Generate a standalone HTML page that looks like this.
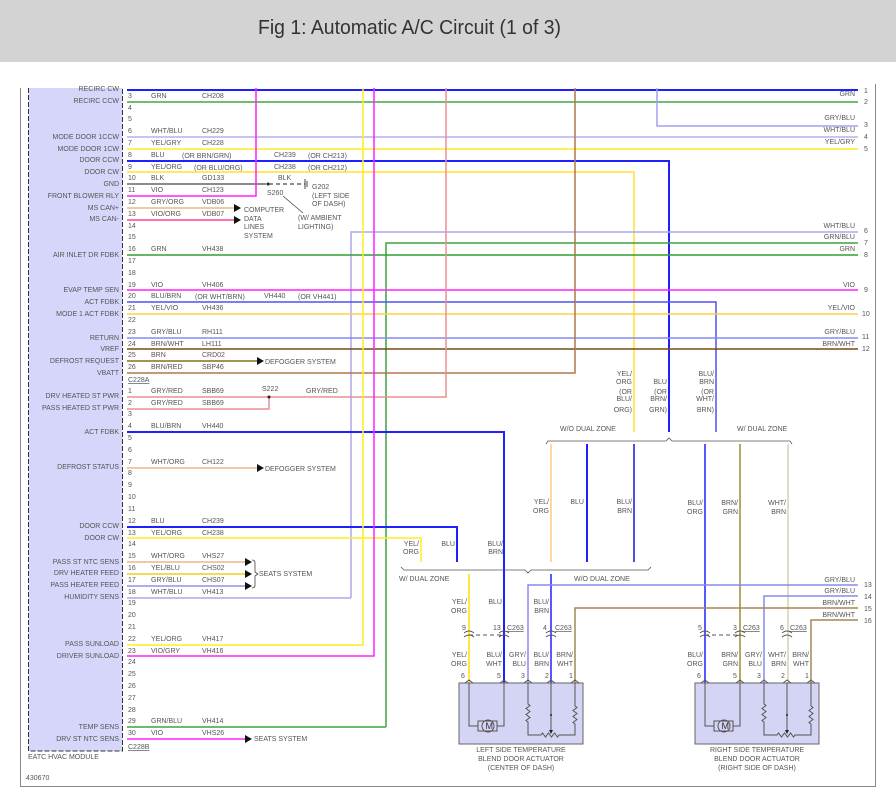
<!DOCTYPE html>
<html><head><meta charset="utf-8"><style>
html,body{margin:0;padding:0;background:#fff;}
svg{display:block;}
text{font-family:"Liberation Sans",sans-serif;font-size:7px;fill:#555;}
</style></head><body>
<svg width="896" height="809" viewBox="0 0 896 809" xmlns="http://www.w3.org/2000/svg">
<rect x="0" y="0" width="896" height="62" fill="#d3d3d3"/>
<text x="258" y="34" style="font-size:20px;fill:#333" textLength="303" lengthAdjust="spacingAndGlyphs">Fig 1: Automatic A/C Circuit (1 of 3)</text>
<!-- frame -->
<path d="M20.5,88 V786.5 H875.5 V84" fill="none" stroke="#888" stroke-width="1"/>
<!-- module -->
<rect x="28.5" y="88" width="94" height="663" fill="#d6d6fa"/>
<path d="M28.5,88 V751 H122.5 V88" fill="none" stroke="#333" stroke-width="1" stroke-dasharray="5,2"/>
<g text-anchor="end">
<text x="119" y="91">RECIRC CW</text><text x="119" y="103">RECIRC CCW</text>
<text x="119" y="139">MODE DOOR 1CCW</text><text x="119" y="151">MODE DOOR 1CW</text>
<text x="119" y="162">DOOR CCW</text><text x="119" y="174">DOOR CW</text>
<text x="119" y="186">GND</text><text x="119" y="198">FRONT BLOWER RLY</text>
<text x="119" y="210">MS CAN+</text><text x="119" y="221">MS CAN-</text>
<text x="119" y="257">AIR INLET DR FDBK</text>
<text x="119" y="292">EVAP TEMP SEN</text><text x="119" y="304">ACT FDBK</text>
<text x="119" y="316">MODE 1 ACT FDBK</text><text x="119" y="340">RETURN</text>
<text x="119" y="351">VREF</text><text x="119" y="363">DEFROST REQUEST</text>
<text x="119" y="375">VBATT</text>
<text x="119" y="398">DRV HEATED ST PWR</text><text x="119" y="410">PASS HEATED ST PWR</text>
<text x="119" y="434">ACT FDBK</text><text x="119" y="469">DEFROST STATUS</text>
<text x="119" y="528">DOOR CCW</text><text x="119" y="540">DOOR CW</text>
<text x="119" y="564">PASS ST NTC SENS</text><text x="119" y="575">DRV HEATER FEED</text>
<text x="119" y="587">PASS HEATER FEED</text><text x="119" y="599">HUMIDITY SENS</text>
<text x="119" y="646">PASS SUNLOAD</text><text x="119" y="658">DRIVER SUNLOAD</text>
<text x="119" y="729">TEMP SENS</text><text x="119" y="741">DRV ST NTC SENS</text>
</g>
<text x="28" y="759">EATC HVAC MODULE</text>
<text x="26" y="780">430670</text>
<text x="128" y="382" text-decoration="underline">C228A</text>
<text x="128" y="749" text-decoration="underline">C228B</text>
<!-- pin numbers -->
<g>
<text x="128" y="98">3</text><text x="128" y="110">4</text><text x="128" y="121">5</text><text x="128" y="133">6</text><text x="128" y="145">7</text><text x="128" y="157">8</text><text x="128" y="169">9</text><text x="128" y="180">10</text><text x="128" y="192">11</text><text x="128" y="204">12</text><text x="128" y="216">13</text><text x="128" y="228">14</text><text x="128" y="239">15</text><text x="128" y="251">16</text><text x="128" y="263">17</text><text x="128" y="275">18</text><text x="128" y="287">19</text><text x="128" y="298">20</text><text x="128" y="310">21</text><text x="128" y="322">22</text><text x="128" y="334">23</text><text x="128" y="346">24</text><text x="128" y="357">25</text><text x="128" y="369">26</text>
<text x="128" y="393">1</text><text x="128" y="405">2</text><text x="128" y="416">3</text><text x="128" y="428">4</text><text x="128" y="440">5</text><text x="128" y="452">6</text><text x="128" y="464">7</text><text x="128" y="475">8</text><text x="128" y="487">9</text><text x="128" y="499">10</text><text x="128" y="511">11</text><text x="128" y="523">12</text><text x="128" y="535">13</text><text x="128" y="546">14</text><text x="128" y="558">15</text><text x="128" y="570">16</text><text x="128" y="582">17</text><text x="128" y="594">18</text><text x="128" y="605">19</text><text x="128" y="617">20</text><text x="128" y="629">21</text><text x="128" y="641">22</text><text x="128" y="653">23</text><text x="128" y="664">24</text><text x="128" y="676">25</text><text x="128" y="688">26</text><text x="128" y="700">27</text><text x="128" y="712">28</text><text x="128" y="723">29</text><text x="128" y="735">30</text>
</g>
<!-- wire labels -->
<g>
<text x="151" y="98">GRN</text><text x="202" y="98">CH208</text>
<text x="151" y="133">WHT/BLU</text><text x="202" y="133">CH229</text>
<text x="151" y="145">YEL/GRY</text><text x="202" y="145">CH228</text>
<text x="151" y="157">BLU</text><text x="182" y="158">(OR BRN/GRN)</text><text x="274" y="157">CH239</text><text x="308" y="158">(OR CH213)</text>
<text x="151" y="169">YEL/ORG</text><text x="194" y="170">(OR BLU/ORG)</text><text x="274" y="169">CH238</text><text x="308" y="170">(OR CH212)</text>
<text x="151" y="180">BLK</text><text x="202" y="180">GD133</text><text x="278" y="180">BLK</text>
<text x="151" y="192">VIO</text><text x="202" y="192">CH123</text>
<text x="151" y="204">GRY/ORG</text><text x="202" y="204">VDB06</text>
<text x="151" y="216">VIO/ORG</text><text x="202" y="216">VDB07</text>
<text x="151" y="251">GRN</text><text x="202" y="251">VH438</text>
<text x="151" y="287">VIO</text><text x="202" y="287">VH406</text>
<text x="151" y="298">BLU/BRN</text><text x="195" y="299">(OR WHT/BRN)</text><text x="264" y="298">VH440</text><text x="298" y="299">(OR VH441)</text>
<text x="151" y="310">YEL/VIO</text><text x="202" y="310">VH436</text>
<text x="151" y="334">GRY/BLU</text><text x="202" y="334">RH111</text>
<text x="151" y="346">BRN/WHT</text><text x="202" y="346">LH111</text>
<text x="151" y="357">BRN</text><text x="202" y="357">CRD02</text>
<text x="151" y="369">BRN/RED</text><text x="202" y="369">SBP46</text>
<text x="151" y="393">GRY/RED</text><text x="202" y="393">SBB69</text><text x="262" y="391">S222</text><text x="306" y="393">GRY/RED</text>
<text x="151" y="405">GRY/RED</text><text x="202" y="405">SBB69</text>
<text x="151" y="428">BLU/BRN</text><text x="202" y="428">VH440</text>
<text x="151" y="464">WHT/ORG</text><text x="202" y="464">CH122</text>
<text x="151" y="523">BLU</text><text x="202" y="523">CH239</text>
<text x="151" y="535">YEL/ORG</text><text x="202" y="535">CH238</text>
<text x="151" y="558">WHT/ORG</text><text x="202" y="558">VHS27</text>
<text x="151" y="570">YEL/BLU</text><text x="202" y="570">CHS02</text>
<text x="151" y="582">GRY/BLU</text><text x="202" y="582">CHS07</text>
<text x="151" y="594">WHT/BLU</text><text x="202" y="594">VH413</text>
<text x="151" y="641">YEL/ORG</text><text x="202" y="641">VH417</text>
<text x="151" y="653">VIO/GRY</text><text x="202" y="653">VH416</text>
<text x="151" y="723">GRN/BLU</text><text x="202" y="723">VH414</text>
<text x="151" y="735">VIO</text><text x="202" y="735">VHS26</text>
<text x="267" y="195">S260</text>
<text x="312" y="189">G202</text><text x="312" y="198">(LEFT SIDE</text><text x="312" y="206">OF DASH)</text>
<text x="298" y="220">(W/ AMBIENT</text><text x="298" y="229">LIGHTING)</text>
<text x="244" y="212">COMPUTER</text><text x="244" y="221">DATA</text><text x="244" y="229">LINES</text><text x="244" y="238">SYSTEM</text>
<text x="265" y="364">DEFOGGER SYSTEM</text>
<text x="265" y="471">DEFOGGER SYSTEM</text>
<text x="259" y="576">SEATS SYSTEM</text>
<text x="254" y="741">SEATS SYSTEM</text>
</g>
<!-- wires -->
<g fill="none" stroke-width="1.5">
<path d="M127,90 H858" stroke="#2020ff" stroke-width="2"/>
<path d="M127,102 H858" stroke="#40a840"/>
<path d="M657,88 V126 H858" stroke="#a0a0ee"/>
<path d="M127,137 H858" stroke="#b4b4f0"/>
<path d="M127,149 H858" stroke="#ffee20"/>
<path d="M127,161 H669 V432" stroke="#2020ff" stroke-width="2"/>
<path d="M127,172 H634 V432" stroke="#ffe030"/>
<path d="M127,184 H262" stroke="#666"/>
<path d="M262,184 H305" stroke="#666" stroke-dasharray="4,3"/>
<path d="M305,179 V189 M307,181 V187" stroke="#444" stroke-width="1"/>
<path d="M303,213 L283,196" stroke="#444" stroke-width="0.8"/>
<path d="M127,196 H256 V88" stroke="#ff20ff"/>
<path d="M127,208 H236" stroke="#e8b888"/>
<path d="M127,220 H236" stroke="#ff4488"/>
<path d="M351,598 V232 H858" stroke="#a8a8f0"/>
<path d="M386,727 V243 H858" stroke="#40a040"/>
<path d="M127,255 H858" stroke="#30a030"/>
<path d="M127,290 H858" stroke="#ff20ff"/>
<path d="M127,302 H716 V432" stroke="#5050f0"/>
<path d="M127,314 H858" stroke="#ffd040"/>
<path d="M127,338 H858" stroke="#8888ee"/>
<path d="M127,349 H858" stroke="#7a4a10"/>
<path d="M127,361 H258" stroke="#8b6b20"/>
<path d="M127,373 H575 V88" stroke="#b07848"/>
<path d="M127,397 H446 V88" stroke="#e89090"/>
<path d="M127,409 H269 V397" stroke="#e89090"/>
<path d="M127,432 H504 V683" stroke="#2020ff" stroke-width="2"/>
<path d="M127,468 H258" stroke="#e8b888"/>
<path d="M127,527 H457 V562" stroke="#2020ff" stroke-width="2"/>
<path d="M127,538 H421 V562" stroke="#ffee20"/>
<path d="M127,562 H246" stroke="#e8b888"/>
<path d="M127,574 H246" stroke="#e8d020"/>
<path d="M127,586 H246" stroke="#9090ee"/>
<path d="M127,598 H351" stroke="#a8a8f0"/>
<path d="M127,645 H363 V88" stroke="#ffee20"/>
<path d="M127,656 H374 V88" stroke="#ff20ff"/>
<path d="M127,727 H386" stroke="#40a040"/>
<path d="M127,739 H246" stroke="#ff20ff"/>
<!-- middle verticals -->
<path d="M551,444 V562" stroke="#ffc888"/>
<path d="M587,444 V562" stroke="#2020ff" stroke-width="2"/>
<path d="M634,444 V562" stroke="#5050e0" stroke-width="2"/>
<path d="M705,444 V683" stroke="#2020ff"/>
<path d="M740,444 V683" stroke="#9b8b3b"/>
<path d="M788,444 V683" stroke="#d8d0b0"/>
<path d="M469,574 V683" stroke="#ffdd00"/>
<path d="M551,574 V683" stroke="#2020ff"/>
<path d="M528,683 V585 H858" stroke="#8888ee"/>
<path d="M764,683 V596 H858" stroke="#8888ee"/>
<path d="M575,683 V608 H858" stroke="#a08850"/>
<path d="M811,683 V620 H858" stroke="#a08850"/>
<!-- brackets -->
<path d="M546,444 l2,-3 H666 l3,-3 l3,3 H790 l2,3" stroke="#555" stroke-width="0.8"/>
<path d="M401,567 l3,3 H525 l3,3 l3,-3 H648 l3,-3" stroke="#555" stroke-width="0.8"/>
<path d="M252,560 q3,0 3,3 v9 l3,2 l-3,2 v9 q0,3 -3,3" stroke="#444" stroke-width="0.8"/>
<!-- C263 dashed -->
<path d="M469,635 H504 M705,635 H740" stroke="#555" stroke-width="1" stroke-dasharray="4,3"/>
</g>
<!-- dots & arrows -->
<circle cx="268" cy="184" r="1.5" fill="#222"/><circle cx="269" cy="397" r="1.5" fill="#222"/>
<g fill="#111">
<path d="M234,204 l7,4 l-7,4z"/><path d="M234,216 l7,4 l-7,4z"/>
<path d="M257,357 l7,4 l-7,4z"/><path d="M257,464 l7,4 l-7,4z"/>
<path d="M245,558 l7,4 l-7,4z"/><path d="M245,570 l7,4 l-7,4z"/><path d="M245,582 l7,4 l-7,4z"/>
<path d="M245,735 l7,4 l-7,4z"/>
</g>
<!-- right pin numbers and labels -->
<g text-anchor="end">
<text x="855" y="96">GRN</text><text x="855" y="120">GRY/BLU</text><text x="855" y="132">WHT/BLU</text><text x="855" y="144">YEL/GRY</text>
<text x="855" y="228">WHT/BLU</text><text x="855" y="239">GRN/BLU</text><text x="855" y="251">GRN</text>
<text x="855" y="287">VIO</text><text x="855" y="310">YEL/VIO</text><text x="855" y="334">GRY/BLU</text><text x="855" y="346">BRN/WHT</text>
<text x="855" y="582">GRY/BLU</text><text x="855" y="593">GRY/BLU</text><text x="855" y="605">BRN/WHT</text><text x="855" y="617">BRN/WHT</text>
<text x="632" y="376">YEL/</text><text x="632" y="384">ORG</text><text x="632" y="394">(OR</text><text x="632" y="401">BLU/</text><text x="632" y="412">ORG)</text>
<text x="667" y="384">BLU</text><text x="667" y="394">(OR</text><text x="667" y="401">BRN/</text><text x="667" y="412">GRN)</text>
<text x="714" y="376">BLU/</text><text x="714" y="384">BRN</text><text x="714" y="394">(OR</text><text x="714" y="401">WHT/</text><text x="714" y="412">BRN)</text>
<text x="549" y="504">YEL/</text><text x="549" y="513">ORG</text><text x="584" y="504">BLU</text>
<text x="632" y="504">BLU/</text><text x="632" y="513">BRN</text>
<text x="703" y="505">BLU/</text><text x="703" y="514">ORG</text><text x="738" y="505">BRN/</text><text x="738" y="514">GRN</text>
<text x="786" y="505">WHT/</text><text x="786" y="514">BRN</text>
<text x="419" y="546">YEL/</text><text x="419" y="554">ORG</text><text x="455" y="546">BLU</text>
<text x="503" y="546">BLU/</text><text x="503" y="554">BRN</text>
<text x="467" y="604">YEL/</text><text x="467" y="613">ORG</text><text x="502" y="604">BLU</text>
<text x="549" y="604">BLU/</text><text x="549" y="613">BRN</text>
<text x="467" y="657">YEL/</text><text x="467" y="666">ORG</text><text x="502" y="657">BLU/</text><text x="502" y="666">WHT</text>
<text x="526" y="657">GRY/</text><text x="526" y="666">BLU</text><text x="549" y="657">BLU/</text><text x="549" y="666">BRN</text>
<text x="573" y="657">BRN/</text><text x="573" y="666">WHT</text>
<text x="703" y="657">BLU/</text><text x="703" y="666">ORG</text><text x="738" y="657">BRN/</text><text x="738" y="666">GRN</text>
<text x="762" y="657">GRY/</text><text x="762" y="666">BLU</text><text x="786" y="657">WHT/</text><text x="786" y="666">BRN</text>
<text x="809" y="657">BRN/</text><text x="809" y="666">WHT</text>
</g>
<g>
<text x="864" y="93">1</text><text x="864" y="104">2</text><text x="864" y="127">3</text><text x="864" y="139">4</text><text x="864" y="151">5</text>
<text x="864" y="233">6</text><text x="864" y="245">7</text><text x="864" y="257">8</text><text x="864" y="292">9</text><text x="862" y="316">10</text>
<text x="862" y="339">11</text><text x="862" y="351">12</text>
<text x="864" y="587">13</text><text x="864" y="599">14</text><text x="864" y="611">15</text><text x="864" y="623">16</text>
<text x="560" y="431">W/O DUAL ZONE</text><text x="737" y="431">W/ DUAL ZONE</text>
<text x="399" y="581">W/ DUAL ZONE</text><text x="574" y="581">W/O DUAL ZONE</text>
<text x="462" y="630">9</text><text x="493" y="630">13</text><text x="507" y="630" text-decoration="underline">C263</text>
<text x="543" y="630">4</text><text x="555" y="630" text-decoration="underline">C263</text>
<text x="698" y="630">5</text><text x="733" y="630">3</text><text x="743" y="630" text-decoration="underline">C263</text>
<text x="780" y="630">6</text><text x="790" y="630" text-decoration="underline">C263</text>
<text x="461" y="678">6</text><text x="497" y="678">5</text><text x="521" y="678">3</text><text x="545" y="678">2</text><text x="569" y="678">1</text>
<text x="697" y="678">6</text><text x="733" y="678">5</text><text x="757" y="678">3</text><text x="781" y="678">2</text><text x="805" y="678">1</text>
</g>
<g text-anchor="middle">
<text x="521" y="752">LEFT SIDE TEMPERATURE</text><text x="521" y="761">BLEND DOOR ACTUATOR</text><text x="521" y="770">(CENTER OF DASH)</text>
<text x="757" y="752">RIGHT SIDE TEMPERATURE</text><text x="757" y="761">BLEND DOOR ACTUATOR</text><text x="757" y="770">(RIGHT SIDE OF DASH)</text>
</g>
<!-- actuators -->
<g id="act">
<rect x="459" y="683" width="124" height="61" fill="#d4d4f4" stroke="#666" stroke-width="1"/>
<g fill="none" stroke="#555" stroke-width="1">
<path d="M464,633 q5,-4 10,0 M464,637 q5,-4 10,0 M499,633 q5,-4 10,0 M499,637 q5,-4 10,0 M546,633 q5,-4 10,0 M546,637 q5,-4 10,0"/>
<path d="M465,683 l4,-3 l4,3 M500,683 l4,-3 l4,3 M524,683 l4,-3 l4,3 M547,683 l4,-3 l4,3 M571,683 l4,-3 l4,3"/>
<path d="M469,683 V726 H478 M497,726 H504 V683"/>
<rect x="478" y="721" width="19" height="10"/>
<circle cx="488" cy="726" r="6"/>
<path d="M528,683 V704 l2,1.5 l-4,3 l4,3 l-4,3 l4,3 l-4,3 l2,1.5 V735 H541 l1.5,-2 l3,4 l3,-4 l3,4 l3,-4 l3,4 l1.5,-2 H575 V724 l-2,-1.5 l4,-3 l-4,-3 l4,-3 l-4,-3 l4,-3 l-2,-1.5 V683"/>
<path d="M551,683 V731"/>
</g>
<path d="M549,730 l2,4 l2,-4z" fill="#222"/>
<circle cx="551" cy="715" r="1" fill="#222"/>
<text x="485.5" y="729" style="font-size:9px;fill:#333">M</text>
</g>
<use href="#act" x="236"/>
</svg>
</body></html>
